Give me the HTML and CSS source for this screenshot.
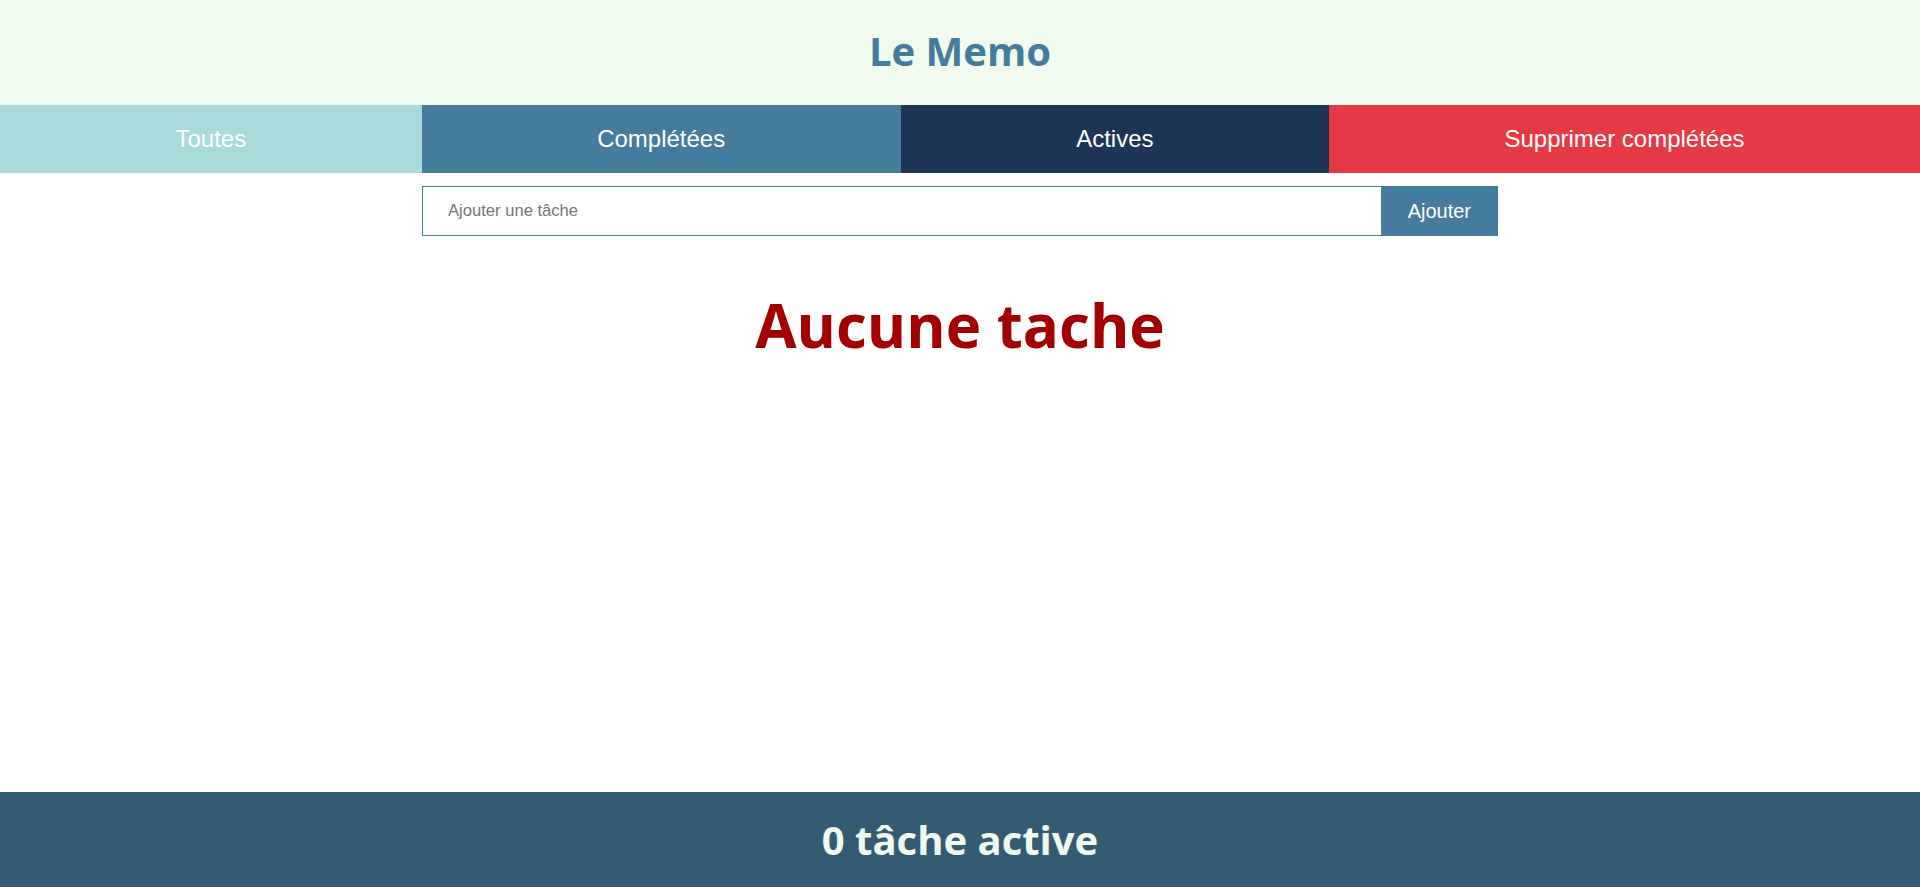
FILE: index.html
```html
<!DOCTYPE html>
<html lang="fr">
<head>
<meta charset="utf-8">
<title>Le Memo</title>
<link rel="stylesheet" href="styles.css">
</head>
<body>
<header class="header">
  <h1 class="title">Le Memo</h1>
</header>
<nav class="filters">
  <button class="filter filter-all">Toutes</button>
  <button class="filter filter-done">Complétées</button>
  <button class="filter filter-active">Actives</button>
  <button class="filter filter-clear">Supprimer complétées</button>
</nav>
<main class="main">
  <form class="add-form">
    <input class="add-input" type="text" placeholder="Ajouter une tâche">
    <button class="add-btn" type="button">Ajouter</button>
  </form>
  <h2 class="empty">Aucune tache</h2>
</main>
<footer class="footer">
  <p class="count">0 tâche active</p>
</footer>
</body>
</html>
```
FILE: styles.css
```css
* { box-sizing: border-box; }
html, body { margin: 0; padding: 0; }
body {
  min-height: 100vh;
  display: flex;
  flex-direction: column;
  background: #ffffff;
  font-family: "Liberation Sans", Arial, sans-serif;
}
.header {
  height: 105px;
  background: #f1faee;
  display: flex;
  align-items: center;
  justify-content: center;
  padding-bottom: 4px;
}
.title {
  margin: 0;
  font-family: "Open Sans", sans-serif;
  font-weight: 700;
  font-size: 40px;
  color: #457b9d;
}
.filters {
  display: flex;
  height: 68px;
}
.filter {
  flex: 1 1 auto;
  border: none;
  margin: 0;
  padding: 0;
  font-family: "Liberation Sans", Arial, sans-serif;
  font-size: 24px;
  color: #ffffff;
  cursor: pointer;
}
.filter-all { background: #a8dadc; }
.filter-done { background: #457b9d; }
.filter-active { background: #1d3557; }
.filter-clear { background: #e63946; }
.main {
  flex: 1;
  display: flex;
  flex-direction: column;
  align-items: center;
}
.add-form {
  margin-top: 13px;
  width: 1076px;
  display: flex;
  height: 50px;
}
.add-input {
  flex: 1;
  height: 100%;
  border: 1px solid #457b9d;
  border-right: none;
  padding: 0 25px;
  font-family: "Liberation Sans", Arial, sans-serif;
  font-size: 16.6px;
  color: #333;
  outline: none;
}
.add-input::placeholder { color: #757575; }
.add-btn {
  height: 100%;
  border: none;
  background: #457b9d;
  color: #ffffff;
  font-family: "Liberation Sans", Arial, sans-serif;
  font-size: 20px;
  padding: 0 27px;
  cursor: pointer;
}
.empty {
  margin: 48px 0 0;
  font-family: "Open Sans", sans-serif;
  font-weight: 700;
  font-size: 60px;
  color: #a30000;
}
.footer {
  height: 95px;
  background: #335b74;
  display: flex;
  align-items: center;
  justify-content: center;
}
.count {
  margin: 0;
  font-family: "Open Sans", sans-serif;
  font-weight: 700;
  font-size: 40px;
  color: #f1faee;
}
```
